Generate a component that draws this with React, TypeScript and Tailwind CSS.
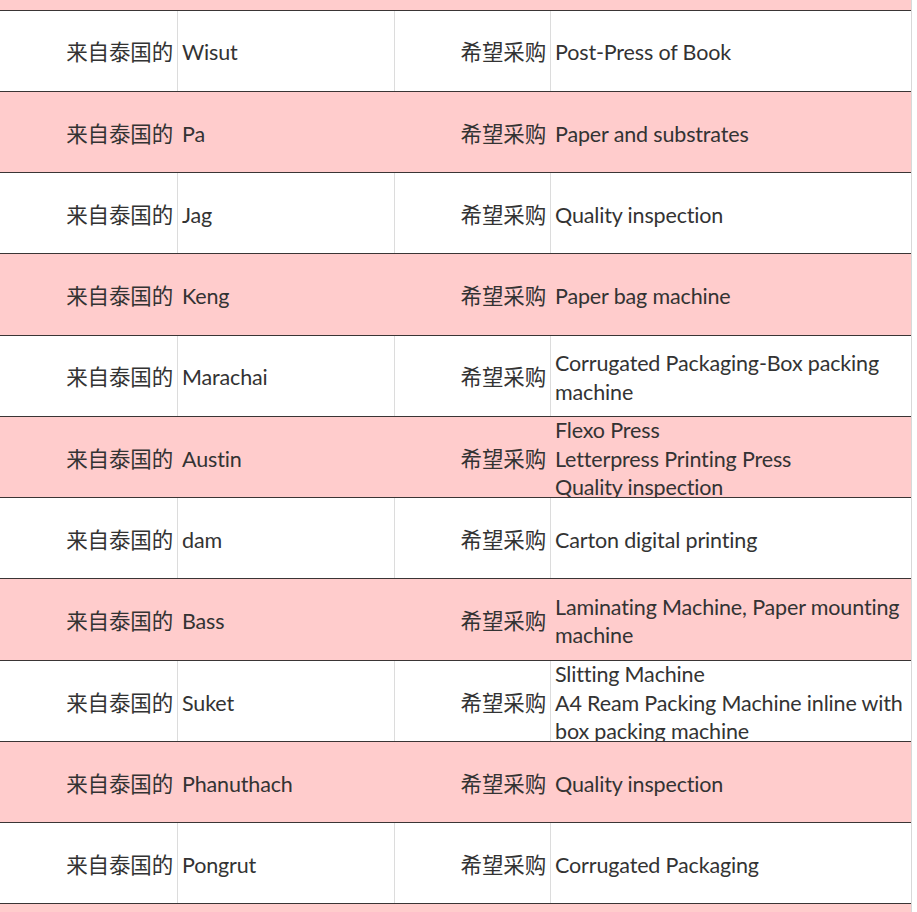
const rows: { name: string; items: string[] }[] = [
  { name: "Wisut", items: ["Post-Press of Book"] },
  { name: "Pa", items: ["Paper and substrates"] },
  { name: "Jag", items: ["Quality inspection"] },
  { name: "Keng", items: ["Paper bag machine"] },
  { name: "Marachai", items: ["Corrugated Packaging-Box packing machine"] },
  { name: "Austin", items: ["Flexo Press", "Letterpress Printing Press", "Quality inspection"] },
  { name: "dam", items: ["Carton digital printing"] },
  { name: "Bass", items: ["Laminating Machine, Paper mounting machine"] },
  { name: "Suket", items: ["Slitting Machine", "A4 Ream Packing Machine inline with box packing machine"] },
  { name: "Phanuthach", items: ["Quality inspection"] },
  { name: "Pongrut", items: ["Corrugated Packaging"] },
];

export default function App() {
  return (
    <div
      className="w-[917px] h-[912px] overflow-hidden bg-white text-[#333] text-[21.5px] leading-[28.5px] tracking-[-0.15px]"
      style={{ fontFamily: 'Lato, "Noto Sans CJK SC", sans-serif' }}
    >
      <div className="w-[912px] border-r border-[#d8d8d8]">
        <div className="h-[9.5px] bg-[#ffcccc]" />
        {rows.map((r, i) => {
          const pink = i % 2 === 1;
          const sep = pink ? "border-[#ffcccc]" : "border-[#dcdcdc]";
          return (
            <div
              key={r.name}
              className={`grid grid-cols-[178px_217px_156px_360px] h-[81.27px] border-t border-[#3a3535] ${
                pink ? "bg-[#ffcccc]" : "bg-white"
              }`}
            >
              <div className={`flex items-center justify-end pr-[4px] pt-[4px] border-r ${sep}`}>来自泰国的</div>
              <div className={`flex items-center pl-[4px] pt-[4px] border-r ${sep}`}>{r.name}</div>
              <div className={`flex items-center justify-end pr-[4px] pt-[4px] border-r ${sep}`}>希望采购</div>
              <div className="flex items-center pl-[4px] pt-[4px] overflow-hidden">
                <div>
                  {r.items.map((t) => (
                    <div key={t}>{t}</div>
                  ))}
                </div>
              </div>
            </div>
          );
        })}
        <div className="h-[12px] border-t border-[#3a3535] bg-[#ffcccc]" />
      </div>
    </div>
  );
}
